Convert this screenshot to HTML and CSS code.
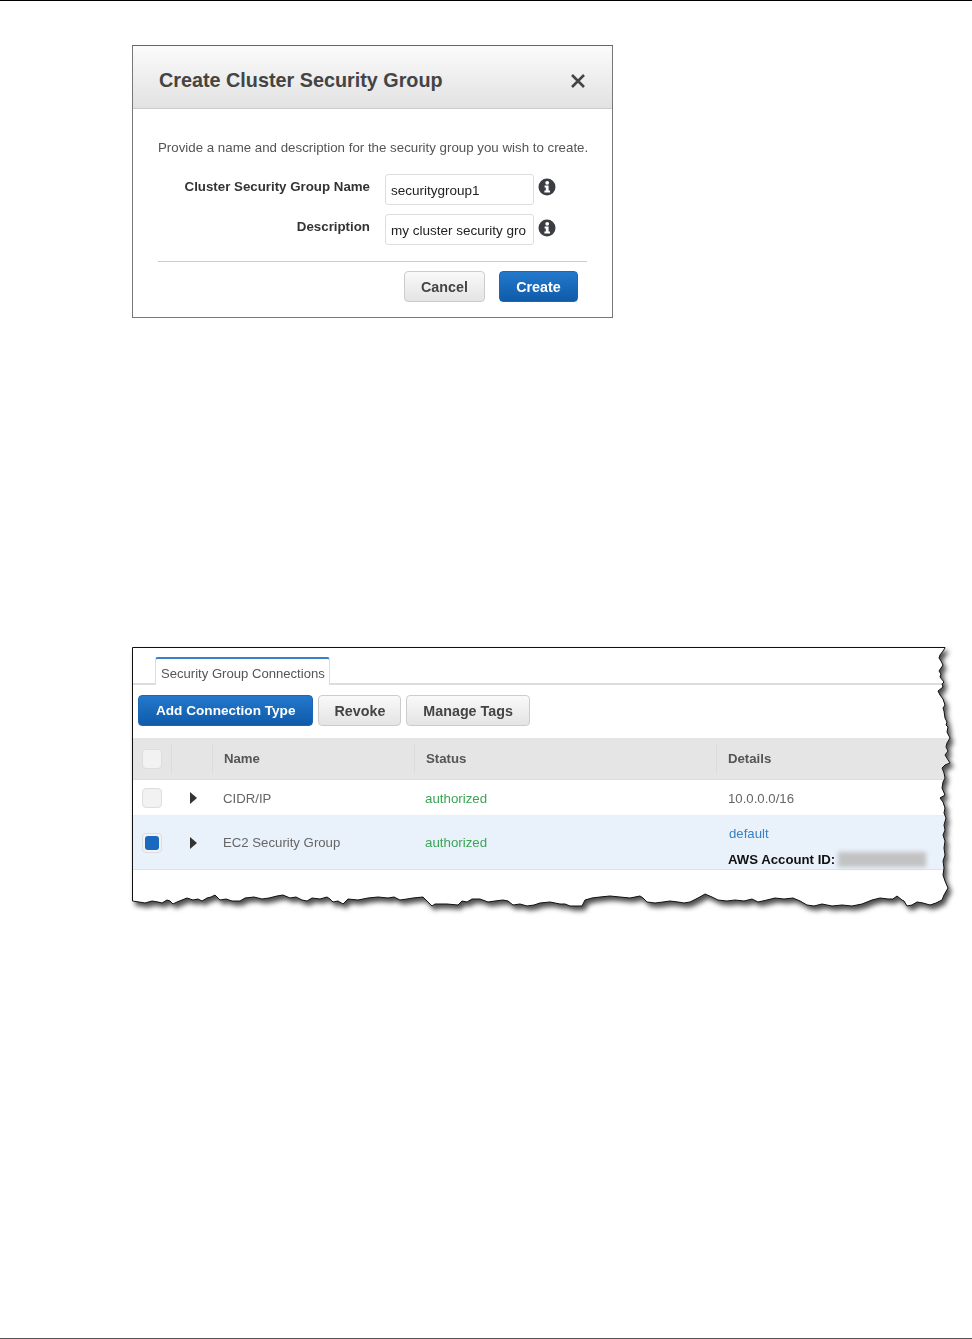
FILE: index.html
```html
<!DOCTYPE html>
<html lang="en">

<head>
    <meta charset="UTF-8">
    <meta name="viewport" content="width=device-width, initial-scale=1.0">
    <title>Create Cluster Security Group</title>
    <link rel="stylesheet" href="styles.css">
</head>

<body>
    <main class="page">
        <section class="dialog">
            <div class="dialog-inner">
                <header class="dialog-head">
                    <h2>Create Cluster Security Group</h2>
                    <svg class="close" width="16" height="16" viewBox="0 0 16 16">
                        <path d="M2 2 14 14M14 2 2 14" stroke="#444" stroke-width="2.6" fill="none" />
                    </svg>
                </header>
                <div class="dialog-body">
                    <p class="intro">Provide a name and description for the security group you wish to create.</p>
                    <div class="field">
                        <label>Cluster Security Group Name</label>
                        <div class="input">securitygroup1</div>
                        <svg class="info" width="18" height="18" viewBox="0 0 18 18">
                            <use href="#info-icon" />
                        </svg>
                    </div>
                    <div class="field">
                        <label>Description</label>
                        <div class="input">my cluster security gro</div>
                        <svg class="info" width="18" height="18" viewBox="0 0 18 18">
                            <use href="#info-icon" />
                        </svg>
                    </div>
                    <div class="dialog-foot">
                        <button class="btn">Cancel</button>
                        <button class="btn primary">Create</button>
                    </div>
                </div>
            </div>
        </section>

        <section class="clip">
            <div class="paper">
                <div class="tabs">
                    <div class="tab">Security Group Connections</div>
                </div>
                <div class="toolbar">
                    <button class="btn primary">Add Connection Type</button>
                    <button class="btn revoke">Revoke</button>
                    <button class="btn">Manage Tags</button>
                </div>
                <div class="row head">
                    <div class="cell"><span class="check"></span></div>
                    <div class="cell sep"></div>
                    <div class="cell sep">Name</div>
                    <div class="cell sep">Status</div>
                    <div class="cell sep">Details</div>
                </div>
                <div class="row plain">
                    <div class="cell"><span class="check"></span></div>
                    <div class="cell"><span class="arrow"></span></div>
                    <div class="cell">CIDR/IP</div>
                    <div class="cell ok">authorized</div>
                    <div class="cell last">10.0.0.0/16</div>
                </div>
                <div class="row selected">
                    <div class="cell"><span class="check on"></span></div>
                    <div class="cell"><span class="arrow"></span></div>
                    <div class="cell">EC2 Security Group</div>
                    <div class="cell ok">authorized</div>
                    <div class="cell last details">
                        <a class="link">default</a>
                        <div class="account"><b>AWS Account ID:</b><span class="redacted"></span></div>
                    </div>
                </div>
            </div>
            <svg class="torn" width="830" height="275" viewBox="0 0 830 275">
                <use href="#torn-edge" fill="none" stroke="#111" stroke-width="1" />
            </svg>
        </section>
    </main>
    <div class="foot-rule"></div>

    <svg class="defs" width="0" height="0">
        <defs>
            <g id="info-icon">
                <circle cx="9" cy="9" r="8.5" fill="#3b3d42" />
                <circle cx="9.2" cy="4.8" r="1.9" fill="#fff" />
                <path d="M6.6 7.6H10.6V12.4H12V14.4H6.4V12.4H7.8V9.6H6.6Z" fill="#fff" />
            </g>
            <path id="torn-edge"
                d="M.5 .5H813L813 1 811 4 808 8 807 11 809 14 811 18 809 21 807 24 809 27 808 30 812 35 810 37 811 40 806 44 808 48 811 52 813 58 811 61 812 64 813 71 815 75 814 78 816 80 815 85 818 91 815 96 814 100 816 104 813 108 818 116 813 118 810 121 812 126 813 131 811 135 810 141 813 148 808 151 811 155 813 161 812 166 814 171 812 178 813 183 811 188 813 194 812 201 813 208 811 214 812 221 811 228 813 234 816 241 812 248 810 253 804 256 798 258 791 256 785 255 780 258 775 259 772 254 770 253 765 249 761 252 756 252 748 251 740 253 730 257 720 259 710 258 700 259 690 257 682 259 675 258 668 254 661 251 652 252 643 251 635 253 626 255 620 252 612 254 603 253 595 254 586 253 580 250 573 247 566 251 558 255 552 256 546 255 538 254 531 255 523 256 515 255 511 251 508 249 498 251 488 250 478 249 468 250 460 251 453 253 450 259 438 259 433 257 428 257 418 255 408 256 402 258 395 259 388 257 381 258 376 254 371 253 363 254 356 255 348 252 340 252 335 255 330 254 326 258 315 257 303 257 300 259 295 254 291 250 281 251 275 252 268 253 262 250 256 251 246 250 236 251 226 253 216 252 211 257 206 254 201 255 198 252 195 250 188 252 180 251 175 254 170 253 164 250 158 251 151 248 145 249 137 251 130 252 122 250 113 251 108 254 100 254 94 252 88 253 83 248 79 250 75 251 70 254 66 252 61 253 55 251 50 253 45 255 41 257 38 254 35 253 30 256 26 255 20 254 13 256 7 255 .5 254Z" />
            <clipPath id="torn-clip" clipPathUnits="userSpaceOnUse">
                <use href="#torn-edge" />
            </clipPath>
        </defs>
    </svg>
</body>

</html>
```

FILE: styles.css
```css
* {
    box-sizing: border-box;
}

body {
    margin: 0;
    height: 1339px;
    display: flex;
    flex-direction: column;
    overflow: hidden;
    background: white;
    border-top: 1px solid black;
    font-family: "Liberation Sans", Arial, sans-serif;
    color: #444;
}

.page {
    flex: 1;
    padding: 44px 0 0 132px;
}

.foot-rule {
    height: 1px;
    background: #555;
}

.defs {
    position: absolute;
}

/* dialog */

.dialog {
    width: 481px;
    height: 273px;
    background: white;
    border: 1px solid #777;
    border-top-color: #666;
}

.dialog-inner {
    filter: blur(0.35px);
}

.dialog-head {
    height: 63px;
    display: flex;
    align-items: center;
    justify-content: space-between;
    padding: 7px 26px 0;
    background: linear-gradient(#fbfbfb, #e2e2e2);
    border-bottom: 1px solid #ccc;
}

.dialog-head h2 {
    margin: 0;
    font-size: 19.8px;
    color: #444;
}

.close {
    margin-top: 1px;
}

.dialog-body {
    padding: 31px 25px 0;
}

.intro {
    margin: 0 0 18px;
    font-size: 13.3px;
    line-height: 16px;
    white-space: nowrap;
    color: #555;
}

.field {
    display: flex;
    align-items: flex-start;
    height: 40px;
}

.field label {
    width: 212px;
    padding-top: 5px;
    text-align: right;
    font-size: 13.3px;
    font-weight: bold;
    color: #333;
}

.input {
    width: 149px;
    height: 31px;
    margin-left: 15px;
    padding: 0 5px;
    line-height: 31px;
    font-size: 13.5px;
    color: #222;
    white-space: nowrap;
    overflow: hidden;
    border: 1px solid #ddd;
    border-radius: 3px;
}

.info {
    margin: 4px 0 0 4px;
}

.field + .field .info {
    margin-top: 5px;
}

.dialog-foot {
    display: flex;
    justify-content: flex-end;
    gap: 14px;
    margin-top: 7px;
    padding: 9px 9px 0 0;
    border-top: 1px solid #ccc;
}

.btn {
    height: 31px;
    padding: 0 16px;
    font-family: inherit;
    font-size: 14.3px;
    font-weight: bold;
    color: #444;
    background: linear-gradient(#f9f9f9, #e4e4e4);
    border: 1px solid #ccc;
    border-radius: 4px;
}

.btn.primary {
    color: white;
    background: linear-gradient(#2478cc, #0f5ba9);
    border-color: #1a67b5;
}

.dialog-foot .btn {
    width: 81px;
    padding: 0;
}

.dialog-foot .btn.primary {
    width: 79px;
}

/* torn screenshot */

.clip {
    position: relative;
    width: 830px;
    height: 275px;
    margin-top: 329px;
    filter: drop-shadow(3px 4px 2.5px rgba(0, 0, 0, 0.7));
}

.paper {
    height: 275px;
    background: white;
    clip-path: url(#torn-clip);
}

.paper > * {
    filter: blur(0.35px);
}

.torn {
    position: absolute;
    top: 0;
    left: 0;
}

.tabs {
    height: 38px;
    padding: 10px 0 0 23px;
    border-bottom: 2px solid #ddd;
}

.tab {
    width: 175px;
    height: 28px;
    margin-bottom: -1px;
    padding-left: 5px;
    line-height: 29px;
    font-size: 13.1px;
    color: #555;
    white-space: nowrap;
    background: white;
    border: 1px solid #ddd;
    border-top: 2px solid #3a80c8;
    border-bottom: 0;
    border-radius: 3px 3px 0 0;
}

.toolbar {
    display: flex;
    gap: 5px;
    height: 53px;
    padding: 10px 0 0 6px;
}

.toolbar .primary {
    padding: 0 17px;
    font-size: 13.6px;
}

.toolbar .revoke {
    padding: 0 15px;
}

.row {
    display: grid;
    grid-template-columns: 40px 41px 202px 302px 1fr;
    height: 36px;
    align-items: center;
    font-size: 13.2px;
    color: #666;
    border-bottom: 1px solid #eee;
}

.row.plain {
    padding-top: 1px;
}

.row.head {
    height: 42px;
    background: #e5e5e5;
    font-weight: bold;
    color: #555;
    border-bottom: 1px solid #ddd;
}

.row.selected {
    height: 54px;
    background: #e9f1fb;
    border-bottom: 1px solid #dde3ea;
}

.cell {
    display: flex;
    align-items: center;
    padding-left: 10px;
}

.row .cell:nth-child(2) {
    padding-left: 18px;
}

.row .last {
    padding-left: 11px;
}

.head .sep {
    height: 30px;
    margin-left: -1px;
    border-left: 1px solid #dcdcdc;
    padding-left: 11px;
}

.check {
    display: flex;
    align-items: center;
    justify-content: center;
    width: 20px;
    height: 20px;
    background: #f2f2f2;
    border: 1px solid #ddd;
    border-radius: 4px;
}

.check.on::after {
    content: "";
    width: 14px;
    height: 14px;
    background: #1a68c0;
    border-radius: 3px;
}

.arrow {
    width: 0;
    height: 0;
    border-left: 7px solid #333;
    border-top: 6px solid transparent;
    border-bottom: 6px solid transparent;
}

.ok {
    font-size: 13.3px;
    color: #3aa655;
}

.details {
    flex-direction: column;
    align-items: flex-start;
    gap: 10px;
    margin-top: 8px;
}

.link {
    margin-left: 1px;
    line-height: 16px;
    color: #3a80c0;
}

.account {
    display: flex;
    align-items: center;
    gap: 3px;
    line-height: 16px;
    color: #111;
}

.redacted {
    width: 88px;
    height: 15px;
    background: #c2c2c2;
    filter: blur(2px);
}
```
